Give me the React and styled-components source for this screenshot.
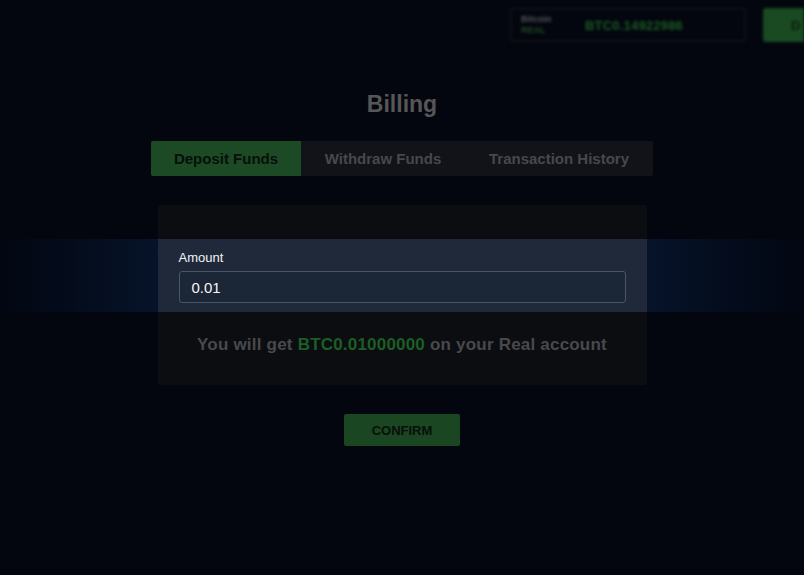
import React from "react";
import styled, { createGlobalStyle } from "styled-components";

const GlobalStyle = createGlobalStyle`
  html, body {
    margin: 0;
    padding: 0;
    background: #03060e;
  }
  body {
    font-family: "Liberation Sans", Arial, sans-serif;
  }
`;

const Page = styled.div`
  width: 804px;
  height: 575px;
  overflow: hidden;
  background: #03060e;
`;

const Header = styled.header`
  display: flex;
  justify-content: flex-end;
  align-items: center;
  height: 51px;
  border-bottom: 1px solid #080b14;
  box-sizing: border-box;
  overflow: hidden;
  filter: blur(1.4px);
`;

const BalanceBox = styled.div`
  display: flex;
  align-items: center;
  width: 236px;
  height: 34px;
  margin-right: 17px;
  padding: 0 9px;
  box-sizing: border-box;
  border: 2px solid #0f1216;
  border-radius: 4px;
`;

const Account = styled.div`
  display: flex;
  flex-direction: column;
  width: 64px;
  font-size: 9px;
  line-height: 11px;
  color: #55575c;
  font-weight: bold;
`;

const AccountType = styled.span`
  color: #1c4d22;
`;

const BalanceValue = styled.span`
  font-size: 13px;
  font-weight: bold;
  color: #1b5a22;
  letter-spacing: 0.2px;
`;

const HeaderButton = styled.div`
  display: flex;
  align-items: center;
  flex-shrink: 0;
  height: 34px;
  width: 41px;
  padding-left: 28px;
  box-sizing: border-box;
  background: #1a4a22;
  border-radius: 3px 0 0 3px;
  overflow: hidden;
  font-size: 13px;
  font-weight: bold;
  color: #0b1a0d;
`;

const Title = styled.h1`
  margin: 39px 0 0;
  text-align: center;
  font-size: 23px;
  line-height: 28px;
  font-weight: bold;
  color: #565657;
`;

const Tabs = styled.div`
  display: flex;
  width: 502px;
  height: 35px;
  margin: 23px auto 0;
  background: #111318;
  border-radius: 2px;
  overflow: hidden;
`;

const Tab = styled.div`
  display: flex;
  align-items: center;
  justify-content: center;
  width: ${({ $w }) => $w}px;
  font-size: 15px;
  font-weight: bold;
  color: ${({ $active }) => ($active ? "#07100a" : "#46484c")};
  background: ${({ $active }) => ($active ? "#1c4a24" : "transparent")};
`;

const CardTop = styled.div`
  width: 489px;
  height: 34px;
  margin: 29px auto 0;
  background: #0b0d11;
  border-radius: 2px 2px 0 0;
`;

const Band = styled.div`
  display: flex;
  justify-content: center;
  height: 73px;
  background: linear-gradient(
    90deg,
    #020611 0%,
    #061329 19.5%,
    #061329 80.5%,
    #020611 100%
  );
`;

const BandCard = styled.div`
  width: 489px;
  padding: 11px 21px 0 21px;
  box-sizing: border-box;
  background: #1f2939;
`;

const Label = styled.div`
  font-size: 13px;
  line-height: 15px;
  color: #f2f3f5;
  margin-bottom: 6px;
`;

const Input = styled.div`
  display: flex;
  align-items: center;
  height: 32px;
  padding-left: 12px;
  box-sizing: border-box;
  border: 1px solid #4b5568;
  border-radius: 3px;
  background: #1b2636;
  font-size: 15px;
  color: #f4f5f7;
`;

const CardBottom = styled.div`
  display: flex;
  justify-content: center;
  width: 489px;
  height: 73px;
  margin: 0 auto;
  padding-top: 23px;
  box-sizing: border-box;
  background: #0b0d11;
  border-radius: 0 0 2px 2px;
  font-size: 17px;
  letter-spacing: 0.2px;
  font-weight: bold;
  color: #48494c;
`;

const Green = styled.span`
  color: #1c5e25;
  margin: 0 5px;
`;

const Confirm = styled.div`
  display: flex;
  align-items: center;
  justify-content: center;
  width: 116px;
  height: 32px;
  margin: 29px auto 0;
  background: #1a4621;
  border-radius: 2px;
  font-size: 13px;
  font-weight: bold;
  color: #07100a;
`;

export default function App() {
  return (
    <Page>
      <GlobalStyle />
      <Header>
        <BalanceBox>
          <Account>
            Bitcoin
            <AccountType>REAL</AccountType>
          </Account>
          <BalanceValue>BTC0.14922986</BalanceValue>
        </BalanceBox>
        <HeaderButton>D</HeaderButton>
      </Header>
      <Title>Billing</Title>
      <Tabs>
        <Tab $w={150} $active>
          Deposit Funds
        </Tab>
        <Tab $w={164}>Withdraw Funds</Tab>
        <Tab $w={188}>Transaction History</Tab>
      </Tabs>
      <CardTop />
      <Band>
        <BandCard>
          <Label>Amount</Label>
          <Input>0.01</Input>
        </BandCard>
      </Band>
      <CardBottom>
        You will get<Green>BTC0.01000000</Green>on your Real account
      </CardBottom>
      <Confirm>CONFIRM</Confirm>
    </Page>
  );
}
